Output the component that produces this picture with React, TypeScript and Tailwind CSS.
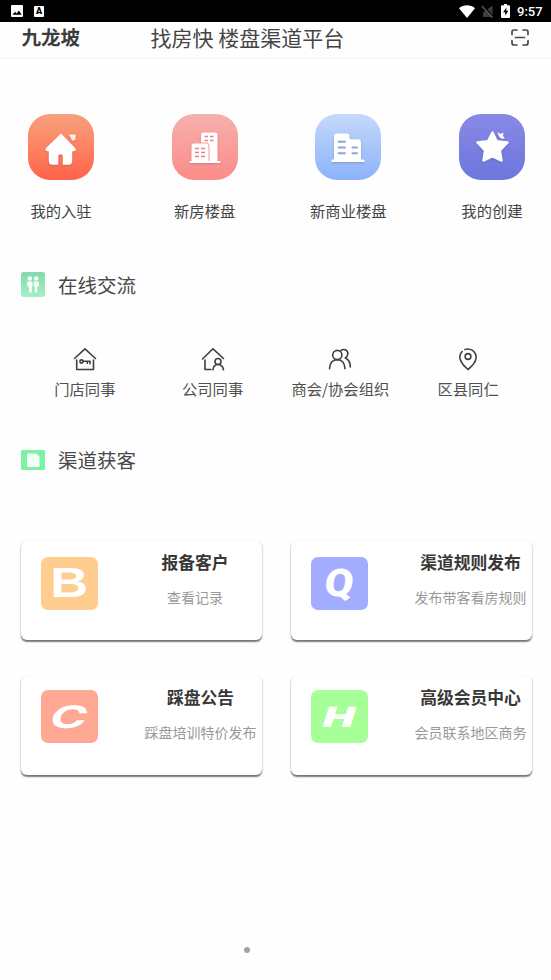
import type { ReactNode } from "react";
import clsx from "clsx";

function StatusBar() {
  return (
    <div className="flex h-[22px] items-center bg-black pl-[11px] pr-[8px] text-white">
      <svg width="12" height="12" viewBox="0 0 12 12">
        <rect width="12" height="12" rx="1" fill="#fff" />
        <path d="M1.5 9.800 4 6.800l1.600 1.700L8 5.500l2.600 4.300z" fill="#000" />
      </svg>
      <span className="ml-[11px] flex h-[11px] w-[10px] items-center justify-center rounded-[1px] bg-white font-['Roboto',sans-serif] text-[9px] leading-none font-black text-black">
        A
      </span>
      <svg className="ml-auto" width="16" height="13" viewBox="0 0 16 13">
        <path d="M0 3.200C4.600-.6 11.400-.6 16 3.200L8 13z" fill="#fff" />
      </svg>
      <svg className="ml-[6px]" width="12" height="13" viewBox="0 0 12 13">
        <path d="M11.500.5v11.500H2V7.500z" fill="#3e3e3e" />
        <path d="M2.200.5l10 11.500" stroke="#000" strokeWidth="1.400" />
        <path d="M.8 1l10.700 11.500" stroke="#5a5a5a" strokeWidth="1.300" />
      </svg>
      <svg className="ml-[8px]" width="9" height="14" viewBox="0 0 9 14">
        <path d="M3 0h3v1.300h2q1 0 1 1V13q0 1-1 1H1q-1 0-1-1V2.300q0-1 1-1h2z" fill="#fff" />
        <path d="M5.500 3.500 2 8.300h2.200v3.500L7.300 6.800H5.200z" fill="#000" />
      </svg>
      <span className="ml-[7px] w-[26px] font-['Roboto',sans-serif] text-[13px] leading-none font-medium whitespace-nowrap">
        9:57
      </span>
    </div>
  );
}

function Header() {
  return (
    <header className="flex h-[37px] items-center border-b border-[#f4f4f4] pr-[22px] pb-[6px] pl-[21.5px]">
      <h2 className="w-[129px] text-[19.5px] leading-[28px] font-bold text-[#3c3c3c]">九龙坡</h2>
      <h1 className="text-[21px] leading-[28px] whitespace-nowrap text-[#444]">找房快 楼盘渠道平台</h1>
      <svg
        className="mt-[1px] ml-auto"
        width="18"
        height="17"
        viewBox="0 0 18 17"
        fill="none"
        stroke="#4a4a4a"
        strokeWidth="1.7"
        strokeLinecap="round"
      >
        <path d="M1 5.500V3q0-2 2-2h3M12 1h3q2 0 2 2v2.500M17 11.500V14q0 2-2 2h-3M6 16H3q-2 0-2-2v-2.500M4.500 8.500h9" />
      </svg>
    </header>
  );
}

const entries = [
  {
    label: "我的入驻",
    tile: "from-[#f7a07c] to-[#ff6248]",
    icon: (
      <>
        <path
          d="M33 20.500 18.500 34.500q-1 2 1 2h2v10q0 3.500 3 3.500h5v-7.500q0-3 3-3t3 3V50h5q3 0 3-3.500v-10h2.500q2-.3.500-2z"
          fill="#fff"
          stroke="#fff"
          strokeWidth="1.500"
          strokeLinejoin="round"
        />
        <path d="M41 20.500h5.500q1.500 0 1.200 1.500l-.5 4-3 .8z" fill="#fff1ea" />
      </>
    ),
  },
  {
    label: "新房楼盘",
    tile: "from-[#f5b0ae] to-[#fb8b88]",
    icon: (
      <>
        <path d="M29 47V20.500q0-2 2-2h12.500q2 0 2 2V47z" fill="#fff" />
        <path d="M19.500 48V32q0-2.500 2.500-2.500h12q2.500 0 2.500 2.500v16z" fill="#fff" />
        <path d="M29 29h5.500q2.500 0 2.500 3v15" stroke="#f79a98" strokeWidth="1" fill="none" />
        <path d="M18.500 48h29" stroke="#fff" strokeWidth="2" strokeLinecap="round" />
        <path
          d="M32.500 22.500H36m2 0h3.500M32.500 26.500H36m2 0h3.500M23 34.500h4m2 0h4M23 38.500h4m2 0h4M23 42.500h4m2 0h4"
          stroke="#e5808c"
          strokeWidth="1.700"
        />
      </>
    ),
  },
  {
    label: "新商业楼盘",
    tile: "from-[#c5d9fa] to-[#8bb2fa]",
    icon: (
      <>
        <path d="M19 46V22q0-2.500 2.500-2.500H32q2.500 0 2.500 2.500v3.300h8.500q3 0 3 3V46z" fill="#fff" />
        <path d="M17.500 46.800h31" stroke="#fff" strokeWidth="2.500" strokeLinecap="round" />
        <path
          d="M23.500 27.800H30M23.500 33.500H30M23.500 39.300H30M37.500 33.500h4.500M37.500 39.300h4.500"
          stroke="#89a9dd"
          strokeWidth="2"
          strokeLinecap="round"
        />
      </>
    ),
  },
  {
    label: "我的创建",
    tile: "from-[#8989e6] to-[#6c76dc]",
    icon: (
      <>
        <path
          d="m33.500 18.500 4.200 8.700 10.800 1.300-7.700 8 1.700 10-9-4.300-9 4.300 1.600-10-7.600-8 10.500-1.300z"
          fill="#fff"
          stroke="#fff"
          strokeWidth="2.500"
          strokeLinejoin="round"
        />
        <path d="m38.500 18 3 2 3-1.500-.5 3.500 2 2.500-3.500.3q-3-1.500-4-6.800z" fill="#fff" />
        <path d="M36.500 18.500q2 7 9 7.500" stroke="#7980dc" strokeWidth="1.300" fill="none" />
      </>
    ),
  },
];

function EntryRow() {
  return (
    <div className="flex justify-between pt-[55px] pr-[26px] pl-[28px]">
      {entries.map((entry) => (
        <div key={entry.label} className="flex w-[66px] flex-col items-center">
          <div className={clsx("size-[66px] rounded-[22px] bg-linear-to-b", entry.tile)}>
            <svg className="drop-shadow-[0_1px_1px_rgba(80,50,80,0.25)]" width="66" height="66" viewBox="0 0 66 66">
              {entry.icon}
            </svg>
          </div>
          <span className="mt-[19px] text-[15.3px] leading-[22px] whitespace-nowrap text-[#444]">{entry.label}</span>
        </div>
      ))}
    </div>
  );
}

function SectionTitle({ icon, children }: { icon: ReactNode; children: ReactNode }) {
  return (
    <div className="flex h-[28px] items-center gap-[13px] pl-[21px]">
      {icon}
      <h3 className="text-[19.5px] leading-[28px] text-[#484848]">{children}</h3>
    </div>
  );
}

const peopleIcon = (
  <svg className="mb-[2px]" width="24" height="25" viewBox="0 0 24 25">
    <defs>
      <linearGradient id="mint" x1="0" y1="0" x2="0" y2="1">
        <stop stopColor="#83d9a9" />
        <stop offset="1" stopColor="#a6efc7" />
      </linearGradient>
    </defs>
    <rect width="24" height="25" rx="2.500" fill="url(#mint)" />
    <g fill="#f4fffa">
      <circle cx="8.800" cy="6.500" r="2.300" />
      <circle cx="15.200" cy="6.500" r="2.300" />
      <path d="M6.300 9.500h5l.3 4.500-.8 1v5.500H8V15l-2-1.500zM12.700 9.500h5l.5 4-2 1.500v5.500h-2.500V15l-1-1z" />
    </g>
  </svg>
);

const docIcon = (
  <svg className="mb-[1px]" width="24" height="20" viewBox="0 0 24 20">
    <rect width="24" height="20" rx="1" fill="#7df2a5" />
    <path d="M6 4.500q0-1 1-1h8l3.500 3v9.500q0 1-1 1H7q-1 0-1-1z" fill="#f5fff8" />
    <path d="M9.500 7.500h3M9.500 10.500h5" stroke="#e2fae9" strokeWidth="1.500" />
  </svg>
);

const contacts = [
  {
    label: "门店同事",
    icon: (
      <>
        <path d="M1.500 11.500 12 1.800l10.500 9.700M3.700 13v9.500h16.800V13" />
        <circle cx="8.500" cy="14.500" r="1.600" />
        <path d="M10.200 14.200h6.800v2.500M14.300 14.500v1.800" />
      </>
    ),
  },
  {
    label: "公司同事",
    icon: (
      <>
        <path d="M1.500 12 12 1.800l10.500 9.700M4 13v9.500h6" />
        <circle cx="17" cy="14.500" r="3" />
        <path d="M12 22.800q.5-5.300 5-5.300t5.500 5.300" />
      </>
    ),
  },
  {
    label: "商会/协会组织",
    icon: (
      <>
        <circle cx="9.300" cy="8" r="4.600" />
        <path d="M1.500 21.800q.5-9 7.800-9 7.200 0 7.700 9M13 3.500q2-1.500 4.300-.7 2.700 1.200 2.500 4.200-.2 2.500-2.500 4 5 2 5 9" />
      </>
    ),
  },
  {
    label: "区县同仁",
    icon: (
      <>
        <path d="M6.200 4.500q-3 3-2.200 7.200Q5.500 17 12 22.500q7-5.500 8-10.800.8-5-3.500-8.300-3.500-2.200-7.500-1" />
        <circle cx="12" cy="9.500" r="2.900" />
      </>
    ),
  },
];

function ContactRow() {
  return (
    <div className="grid grid-cols-4 pt-[48px] pr-[19px] pl-[21px]">
      {contacts.map((contact) => (
        <div key={contact.label} className="flex flex-col items-center">
          <svg
            width="24"
            height="24"
            viewBox="0 0 24 24"
            fill="none"
            stroke="#3f3f3f"
            strokeWidth="1.600"
            strokeLinecap="round"
            strokeLinejoin="round"
          >
            {contact.icon}
          </svg>
          <span className="mt-[6px] text-[15.3px] leading-[22px] whitespace-nowrap text-[#505050]">
            {contact.label}
          </span>
        </div>
      ))}
    </div>
  );
}

const cards = [
  {
    title: "报备客户",
    desc: "查看记录",
    letter: "B",
    tile: "bg-[#ffcd90] mt-[15.5px] ml-[20px]",
    glyph: "font-['Liberation_Sans',sans-serif] text-[42px] font-bold scale-x-[1.25]",
    text: "mr-[11px]",
  },
  {
    title: "渠道规则发布",
    desc: "发布带客看房规则",
    letter: "Q",
    tile: "bg-[#a2adff] mt-[15.5px] ml-[19.500px]",
    glyph: "font-['Roboto',sans-serif] text-[38px] font-black -skew-x-6 scale-x-110",
    text: "mr-[5.5px]",
  },
  {
    title: "踩盘公告",
    desc: "踩盘培训特价发布",
    letter: "C",
    tile: "bg-[#ffa893] mt-[14px] ml-[20px]",
    glyph: "font-['Inter',sans-serif] text-[31px] font-bold -skew-x-12 scale-x-[1.600]",
    text: "mr-[5.5px]",
  },
  {
    title: "高级会员中心",
    desc: "会员联系地区商务",
    letter: "H",
    tile: "bg-[#a6ff97] mt-[14px] ml-[19.5px]",
    glyph: "font-['Inter',sans-serif] text-[28px] font-black -skew-x-12 scale-x-[1.5]",
    text: "mr-[5.5px]",
  },
];

function CardGrid() {
  return (
    <div className="grid grid-cols-[241px_241px] gap-x-[29px] gap-y-[36px] pt-[67px] pl-[21px]">
      {cards.map((card) => (
        <div
          key={card.title}
          className="flex h-[99px] justify-between rounded-[6px] bg-white shadow-[0_1.5px_1.5px_rgba(0,0,0,0.5),0_1px_2px_rgba(0,0,0,0.1)]"
        >
          <div className={clsx("flex h-[53px] w-[57px] items-center justify-center rounded-[7px]", card.tile)}>
            <span className={clsx("leading-none text-white", card.glyph)}>{card.letter}</span>
          </div>
          <div className={clsx("flex w-[112px] flex-col items-center whitespace-nowrap", card.text)}>
            <h4 className="mt-[9px] text-[16.8px] leading-[24px] font-bold text-[#383838]">{card.title}</h4>
            <p className="mt-[13px] text-[14px] leading-[20px] text-[#999]">{card.desc}</p>
          </div>
        </div>
      ))}
    </div>
  );
}

export default function App() {
  return (
    <div className="flex h-[980px] w-[551px] flex-col overflow-hidden bg-[#fefefe] font-['Noto_Sans_CJK_SC',sans-serif]">
      <StatusBar />
      <Header />
      <EntryRow />
      <div className="mt-[50px]">
        <SectionTitle icon={peopleIcon}>在线交流</SectionTitle>
      </div>
      <ContactRow />
      <div className="mt-[47px]">
        <SectionTitle icon={docIcon}>渠道获客</SectionTitle>
      </div>
      <CardGrid />
      <div className="mt-auto mb-[27px] ml-[244px] size-[6px] rounded-full bg-[#a3a3a3]" />
    </div>
  );
}
